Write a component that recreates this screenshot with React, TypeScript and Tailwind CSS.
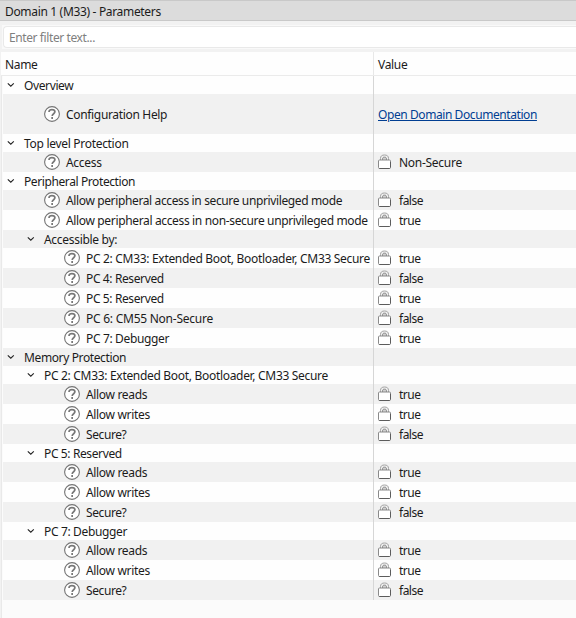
type Row = {
  label: string;
  tracking: string;
  depth: 0 | 1 | 2;
  group?: boolean;
  value?: "true" | "false" | "Non-Secure" | "Open Domain Documentation";
  link?: boolean;
};

const rows: Row[] = [
  { label: "Overview", tracking: "tracking-[-0.38px]", depth: 0, group: true },
  { label: "Configuration Help", tracking: "tracking-[-0.33px]", depth: 1, value: "Open Domain Documentation", link: true },
  { label: "Top level Protection", tracking: "tracking-[-0.3px]", depth: 0, group: true },
  { label: "Access", tracking: "tracking-[-0.3px]", depth: 1, value: "Non-Secure" },
  { label: "Peripheral Protection", tracking: "tracking-[-0.4px]", depth: 0, group: true },
  { label: "Allow peripheral access in secure unprivileged mode", tracking: "tracking-[-0.37px]", depth: 1, value: "false" },
  { label: "Allow peripheral access in non-secure unprivileged mode", tracking: "tracking-[-0.35px]", depth: 1, value: "true" },
  { label: "Accessible by:", tracking: "tracking-[-0.3px]", depth: 1, group: true },
  { label: "PC 2: CM33: Extended Boot, Bootloader, CM33 Secure", tracking: "tracking-[-0.31px]", depth: 2, value: "true" },
  { label: "PC 4: Reserved", tracking: "tracking-[-0.38px]", depth: 2, value: "false" },
  { label: "PC 5: Reserved", tracking: "tracking-[-0.38px]", depth: 2, value: "true" },
  { label: "PC 6: CM55 Non-Secure", tracking: "tracking-[-0.25px]", depth: 2, value: "false" },
  { label: "PC 7: Debugger", tracking: "tracking-[-0.35px]", depth: 2, value: "true" },
  { label: "Memory Protection", tracking: "tracking-[-0.38px]", depth: 0, group: true },
  { label: "PC 2: CM33: Extended Boot, Bootloader, CM33 Secure", tracking: "tracking-[-0.31px]", depth: 1, group: true },
  { label: "Allow reads", tracking: "tracking-[-0.33px]", depth: 2, value: "true" },
  { label: "Allow writes", tracking: "tracking-[-0.33px]", depth: 2, value: "true" },
  { label: "Secure?", tracking: "tracking-[-0.4px]", depth: 2, value: "false" },
  { label: "PC 5: Reserved", tracking: "tracking-[-0.38px]", depth: 1, group: true },
  { label: "Allow reads", tracking: "tracking-[-0.33px]", depth: 2, value: "true" },
  { label: "Allow writes", tracking: "tracking-[-0.33px]", depth: 2, value: "true" },
  { label: "Secure?", tracking: "tracking-[-0.4px]", depth: 2, value: "false" },
  { label: "PC 7: Debugger", tracking: "tracking-[-0.35px]", depth: 1, group: true },
  { label: "Allow reads", tracking: "tracking-[-0.33px]", depth: 2, value: "true" },
  { label: "Allow writes", tracking: "tracking-[-0.33px]", depth: 2, value: "true" },
  { label: "Secure?", tracking: "tracking-[-0.4px]", depth: 2, value: "false" },
];

const valueTracking = {
  true: "tracking-[-0.5px]",
  false: "tracking-[-0.5px]",
  "Non-Secure": "tracking-[-0.28px]",
  "Open Domain Documentation": "tracking-[-0.42px]",
};

function Chevron() {
  return (
    <svg className="mr-[9px] h-2 w-2 shrink-0" viewBox="0 0 8 8" fill="none" stroke="#222" strokeWidth="1.1">
      <path d="M0.8 2.3 3.8 5.2 6.8 2.3" />
    </svg>
  );
}

function HelpIcon() {
  return (
    <svg className="mr-[6px] h-4 w-4 shrink-0" viewBox="0 0 16 16" fill="none">
      <circle cx="8" cy="8" r="7.4" fill="#fff" stroke="#747474" strokeWidth="1.1" />
      <path d="M5 5.9C5 4.4 6.2 3.6 7.9 3.6s3 .8 3 2.2c0 1.9-2.7 2-2.7 4.2" stroke="#777" strokeWidth="1.7" />
      <path d="M7.3 11.1H9v1.8H7.3z" fill="#777" />
    </svg>
  );
}

function LockIcon() {
  return (
    <svg className="mr-[8px] h-[16px] w-[13px] shrink-0" viewBox="0 0 13 16" fill="none">
      <path d="M2.5 6.5V4.5C2.5 2 4 1 6.5 1s4 1 4 3.5v2" fill="#f4f4f4" stroke="#999" strokeWidth=".9" />
      <path d="M4.5 6.5V5c0-1.3.7-1.9 2-1.9s2 .6 2 1.9v1.5" fill="#d0d0d0" stroke="#858585" strokeWidth=".9" />
      <rect x=".5" y="6" width="12" height="8.5" rx="1" fill="#fff" stroke="#8a8a8a" />
      <path d="M1.3 14.5h10.4M12.5 8v5.5" stroke="#5c5c5c" />
    </svg>
  );
}

function indent(row: Row) {
  if (row.group) return row.depth === 0 ? "pl-[4px]" : "pl-[24px]";
  return row.depth === 1 ? "pl-[41px]" : "pl-[61px]";
}

export default function App() {
  return (
    <div className="flex h-[618px] w-[576px] flex-col overflow-hidden whitespace-nowrap bg-[#f2f2f2] font-['Noto_Sans',sans-serif] text-[12px] leading-[17px] tracking-[-0.33px] text-[#1b1b1b]">
      <div className="flex h-[21px] shrink-0 items-center border-y border-[#c9c9c9] bg-[#dcdcdc] pl-[5px] pt-[2px]">
        Domain 1 (M33) - Parameters
      </div>
      <div className="h-[31px] shrink-0 pl-[2px] pt-[4px]">
        <div className="h-6 bg-[#f9f9f9] pl-px pt-px">
          <div className="flex h-[22px] items-center rounded-l border border-r-0 border-[#e9e9e9] bg-white pl-[5px] pt-px tracking-[-0.4px] text-[#808080]">
            Enter filter text...
          </div>
        </div>
      </div>
      <div className="flex h-[566px] flex-col border-l border-[#f2f2f2] bg-[#fbfbfb]">
        <div className="flex h-6 shrink-0 border-b border-[#ebebeb] bg-[#fefefe]">
          <div className="flex w-[373px] items-center border-r border-[#e8e8e8] pl-[4px] pt-[2px]">Name</div>
          <div className="flex items-center pl-[4px] pt-[2px]">Value</div>
        </div>
        <div className="flex flex-1 flex-col border-l border-[#e9e9e9] pl-px">
          {rows.map((row, i) => (
            <div
              key={i}
              className={`flex shrink-0 ${row.link ? "h-10" : row.group ? "h-[18px]" : "h-5"} ${i % 2 ? "bg-[#f1f1f1]" : "bg-[#fefefe]"}`}
            >
              <div className={`flex w-[371px] shrink-0 items-center border-r border-[#d6d6d6] ${indent(row)}`}>
                {row.group ? <Chevron /> : <HelpIcon />}
                <span className={`pt-px ${row.tracking}`}>{row.label}</span>
              </div>
              <div className="flex items-center pl-[4px]">
                {row.value && !row.link && <LockIcon />}
                {row.value && (
                  <span
                    className={`pt-px ${valueTracking[row.value]} ${row.link ? "text-[#003e92] underline underline-offset-1" : ""}`}
                  >
                    {row.value}
                  </span>
                )}
              </div>
            </div>
          ))}
        </div>
      </div>
    </div>
  );
}
